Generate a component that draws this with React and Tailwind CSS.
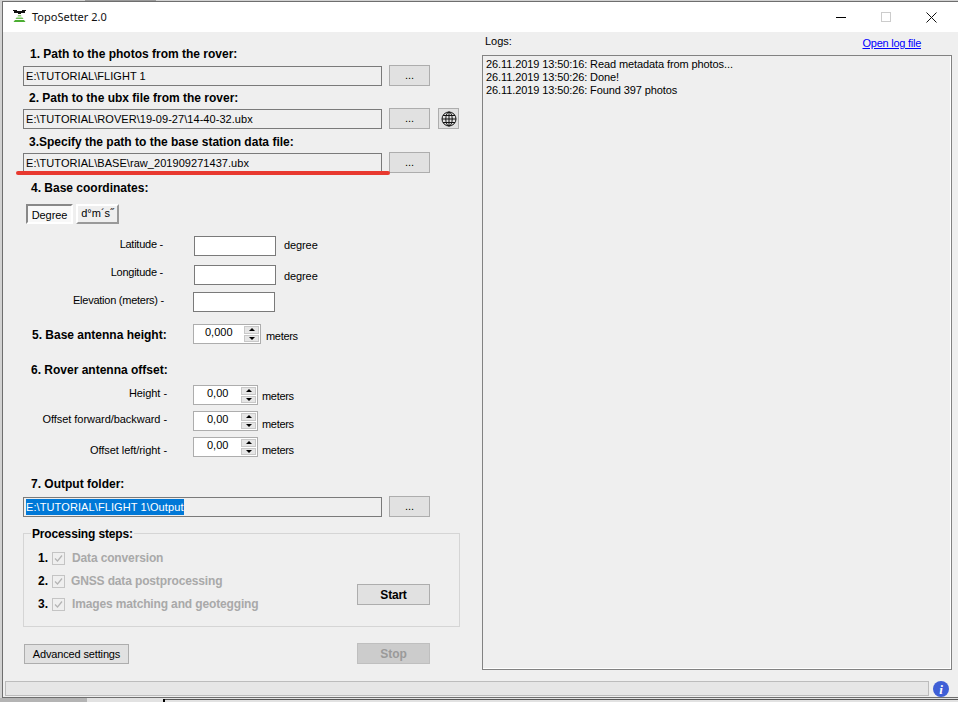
import React from 'react';

const Heading = ({ children, className = '' }) => (
  <div className={`h-4 leading-4 text-[12px] font-bold text-black whitespace-nowrap ${className}`}>
    {children}
  </div>
);

const BrowseButton = ({ className = '' }) => (
  <button className={`w-[41px] h-[21px] shrink-0 bg-[#e1e1e1] border border-[#adadad] text-[11px] leading-[19px] text-black ${className}`}>
    ...
  </button>
);

const PathRow = ({ value, selected, children }) => (
  <div className="flex items-start">
    <div className="mt-px w-[359px] h-5 border border-[#7a7a7a] bg-[#efefef] pl-[2px] text-[11px] leading-[18px] tracking-[0.05px] text-black whitespace-nowrap overflow-hidden">
      {selected ? <span className="bg-[#0078d7] text-white inline-block h-4 leading-4 mt-px tracking-[0.1px]">{value}</span> : value}
    </div>
    <BrowseButton className="ml-[7px]" />
    {children}
  </div>
);

const CoordRow = ({ label, unit, labelWidth = 'w-[140px]', labelClass = '', inputClass = 'ml-[31px]', unitClass = '', className = '' }) => (
  <div className={`flex items-start h-5 text-[11px] text-black whitespace-nowrap ${className}`}>
    <div className={`${labelWidth} text-right leading-4 tracking-[-0.25px] ${labelClass}`}>{label}</div>
    <div className={`w-[82px] h-5 bg-white border border-[#7a7a7a] ${inputClass}`} />
    {unit && <div className={`ml-2 leading-4 tracking-[-0.1px] ${unitClass}`}>{unit}</div>}
  </div>
);

const Spinner = ({ value, width, textClass }) => (
  <div className={`${width} h-5 bg-white border border-[#adadad] flex justify-between items-stretch shrink-0`}>
    <div className={`text-[11px] leading-[15px] text-black ${textClass}`}>{value}</div>
    <div className="w-[15px] mr-px my-px flex flex-col gap-px">
      <div className="flex-1 bg-[#e6e6e6] border border-[#c8c8c8] flex items-center justify-center">
        <div className="w-0 h-0 border-x-[3px] border-x-transparent border-b-[3px] border-b-black" />
      </div>
      <div className="flex-1 bg-[#e6e6e6] border border-[#c8c8c8] flex items-center justify-center">
        <div className="w-0 h-0 border-x-[3px] border-x-transparent border-t-[3px] border-t-black" />
      </div>
    </div>
  </div>
);

const OffsetRow = ({ label, className = '', labelClass = '', unitClass = 'mt-[5px]' }) => (
  <div className={`flex items-start h-5 text-[11px] text-black whitespace-nowrap ${className}`}>
    <div className={`w-[164px] text-right leading-4 tracking-[-0.05px] ${labelClass}`}>{label}</div>
    <div className="ml-[26px]">
      <Spinner value="0,00" width="w-[65px]" textClass="ml-[13px]" />
    </div>
    <div className={`ml-[4px] leading-4 tracking-[-0.3px] ${unitClass}`}>meters</div>
  </div>
);

const Step = ({ num, label, labelClass = 'ml-[7px]', className = '' }) => (
  <div className={`flex items-center h-[14px] text-[12px] whitespace-nowrap ${className}`}>
    <span className="w-[24px] text-right font-bold text-black">{num}</span>
    <div className="ml-[4px] w-[13px] h-[13px] border border-[#c4c4c4] bg-[#efefef] flex items-center justify-center">
      <svg width="11" height="11" viewBox="0 0 11 11" fill="none">
        <path d="M2 5.5 L4.5 8 L9 2.5" stroke="#b4b4b4" strokeWidth="1.2" />
      </svg>
    </div>
    <span className={`font-bold tracking-[-0.14px] text-[#a9a9a9] ${labelClass}`}>{label}</span>
  </div>
);

const Logo = () => (
  <svg width="16" height="14" viewBox="0 0 16 14">
    <rect x="1" y="1" width="4" height="1" fill="#111" />
    <rect x="10" y="1" width="4" height="1" fill="#111" />
    <rect x="2" y="2" width="11" height="2" fill="#111" />
    <rect x="6" y="4" width="3" height="1" fill="#111" />
    <path d="M6 6h3l0.5 1.5h-4z" fill="#8ecb75" />
    <path d="M4.5 8.5h6l1 1.5h-8z" fill="#6fbe55" />
    <path d="M3 11h9l1.5 2h-12z" fill="#4cae33" />
  </svg>
);

const Globe = () => (
  <svg width="16" height="16" viewBox="0 0 16 16" fill="none" stroke="#111" strokeWidth="1">
    <circle cx="8" cy="8" r="7" />
    <ellipse cx="8" cy="8" rx="3.2" ry="7" />
    <path d="M8 1v14M1 8h14M2 4.5h12M2 11.5h12" />
  </svg>
);

const App = () => {
  return (
    <div className="relative w-[958px] h-[702px] overflow-hidden bg-[#d2d2d2] pt-px pl-[2px] font-['Liberation_Sans',Arial,sans-serif]">
      {/* bits of the desktop around the window */}
      <div className="absolute left-[85px] top-0 w-[71px] h-px bg-[#9a9a9a]" />
      <div className="absolute left-0 bottom-0 w-[87px] h-1 bg-[#b4b4b4]" />
      <div className="absolute left-[87px] right-0 bottom-0 h-1 bg-[#e2e2e2]" />
      <div className="absolute left-[163px] bottom-0 w-[2px] h-[3px] bg-black" />
      <div className="absolute left-[165px] right-0 bottom-[2px] h-px bg-[#555555]" />

      <div className="relative w-[956px] h-[697px] border-t border-l border-b border-[#6e6e6e] bg-[#efefef] flex flex-col">
        <div className="h-[30px] bg-white flex items-center shrink-0 relative">
          <div className="ml-[9px] mt-[-2px]">
            <Logo />
          </div>
          <div className="ml-[4px] text-[11px] text-[#111] font-['Noto_Sans',sans-serif]">TopoSetter 2.0</div>
          <div className="ml-auto flex items-center mr-[21px] gap-[35px]">
            <div className="w-[10px] h-px bg-black" />
            <div className="w-[10px] h-[10px] border border-[#cccccc]" />
            <svg width="11" height="11" viewBox="0 0 11 11" stroke="#111" strokeWidth="1">
              <path d="M0.5 0.5 L10.5 10.5 M10.5 0.5 L0.5 10.5" />
            </svg>
          </div>
        </div>

        <div className="flex h-[649px] shrink-0">
          <div className="w-[477px] shrink-0 pl-[20px]">
            <Heading className="mt-[14px] ml-[7px]">1. Path to the photos from the rover:</Heading>
            <div className="mt-[3px]">
              <PathRow value="E:\TUTORIAL\FLIGHT 1" />
            </div>
            <Heading className="mt-[4px] ml-[6px]">2. Path to the ubx file from the rover:</Heading>
            <div className="mt-[2px]">
              <PathRow value="E:\TUTORIAL\ROVER\19-09-27\14-40-32.ubx">
                <button className="ml-2 w-[21px] h-[21px] bg-[#e1e1e1] border border-[#adadad] flex items-center justify-center">
                  <Globe />
                </button>
              </PathRow>
            </div>
            <Heading className="mt-[5px] ml-[6px]">3.Specify the path to the base station data file:</Heading>
            <div className="mt-[2px]">
              <PathRow value="E:\TUTORIAL\BASE\raw_201909271437.ubx" />
            </div>
            <Heading className="mt-[7px] ml-[8px]">4. Base coordinates:</Heading>
            <div className="mt-2 ml-[3px] flex gap-[3px] text-[11px] text-black">
              <div className="w-[47px] h-5 bg-[#f8f8f8] border-2 border-t-[#888] border-l-[#888] border-r-white border-b-white text-center leading-[18px] tracking-[-0.1px]">Degree</div>
              <div className="w-[43px] h-5 bg-[#efefef] border-2 border-t-white border-l-white border-r-[#999] border-b-[#999] text-center leading-[15px]">d°m´s˝</div>
            </div>

            <CoordRow className="mt-3" label="Latitude -" unit="degree" unitClass="mt-px" />
            <CoordRow className="mt-[9px]" label="Longitude -" unit="degree" labelClass="-mt-px" unitClass="mt-[3px]" />
            <CoordRow className="mt-[7px]" label="Elevation (meters) -" labelWidth="w-[141px]" inputClass="ml-[29px]" />

            <div className="mt-3 flex items-start h-5">
              <Heading className="ml-[9px] w-[161px] mt-[3px]">5. Base antenna height:</Heading>
              <Spinner value="0,000" width="w-[68px]" textClass="ml-[11px]" />
              <div className="ml-[5px] mt-1 text-[11px] leading-4 tracking-[-0.3px] text-black">meters</div>
            </div>

            <Heading className="mt-[18px] ml-2">6. Rover antenna offset:</Heading>
            <div className="-ml-5">
              <OffsetRow className="mt-[7px]" label="Height -" unitClass="mt-[3px]" />
              <OffsetRow className="mt-[6px]" label="Offset forward/backward -" />
              <OffsetRow className="mt-[6px]" label="Offset left/right -" labelClass="mt-[5px]" />
            </div>

            <Heading className="mt-[19px] ml-2">7. Output folder:</Heading>
            <div className="mt-1">
              <PathRow value="E:\TUTORIAL\FLIGHT 1\Output" selected />
            </div>

            <fieldset className="mt-4 w-[437px] h-[94px] border border-[#d5d5d5] relative">
              <div className="absolute -top-2 left-[7px] px-px bg-[#efefef] text-[12px] leading-4 font-bold tracking-[-0.15px] text-black">Processing steps:</div>
              <div className="flex">
                <div className="flex-1 pt-[17px]">
                  <Step num="1." label="Data conversion" />
                  <Step num="2." label="GNSS data postprocessing" labelClass="ml-[6px]" className="mt-[9px]" />
                  <Step num="3." label="Images matching and geotegging" className="mt-[9px]" />
                </div>
                <button className="mt-[50px] mr-[29px] w-[73px] h-[21px] bg-[#e1e1e1] border border-[#adadad] text-[12px] tracking-[-0.2px] font-bold text-black">Start</button>
              </div>
            </fieldset>

            <div className="mt-4 flex items-end w-[407px]">
              <button className="ml-px w-[105px] h-5 bg-[#e1e1e1] border border-[#adadad] text-[11px] tracking-[-0.15px] text-black">Advanced settings</button>
              <button className="ml-auto w-[73px] h-[21px] bg-[#cccccc] border border-[#bfbfbf] text-[12px] font-bold text-[#9a9a9a]">Stop</button>
            </div>
          </div>

          <div className="w-[470px] shrink-0 ml-[2px]">
            <div className="flex h-[23px] text-[11px]">
              <div className="ml-[3px] mt-px leading-4 text-black">Logs:</div>
              <a className="ml-auto mr-[31px] mt-[3px] leading-4 tracking-[-0.25px] text-[#0000ff] underline">Open log file</a>
            </div>
            <div className="h-[615px] border border-[#828282] bg-[#efefef] pt-[2px] pl-[3px] text-[11px] leading-[13px] tracking-[-0.1px] text-black shadow-[inset_-1px_-1px_0_#ffffff]">
              <div>26.11.2019 13:50:16: Read metadata from photos...</div>
              <div>26.11.2019 13:50:26: Done!</div>
              <div>26.11.2019 13:50:26: Found 397 photos</div>
            </div>
          </div>
        </div>

        <div className="flex items-start pl-[2px] h-[15px] shrink-0">
          <div className="w-[924px] h-[15px] bg-[#e6e6e6] border border-[#bcbcbc]" />
          <div className="ml-[4px] w-4 h-4 rounded-full bg-[#3f5fd6] flex items-center justify-center text-white text-[13px] font-bold italic leading-none font-['Liberation_Serif',serif]">i</div>
        </div>
      </div>

      <div className="absolute left-[16px] top-[171px] w-[374px] h-1 rounded-full bg-[#e8392f]" />
    </div>
  );
};

export default App;
